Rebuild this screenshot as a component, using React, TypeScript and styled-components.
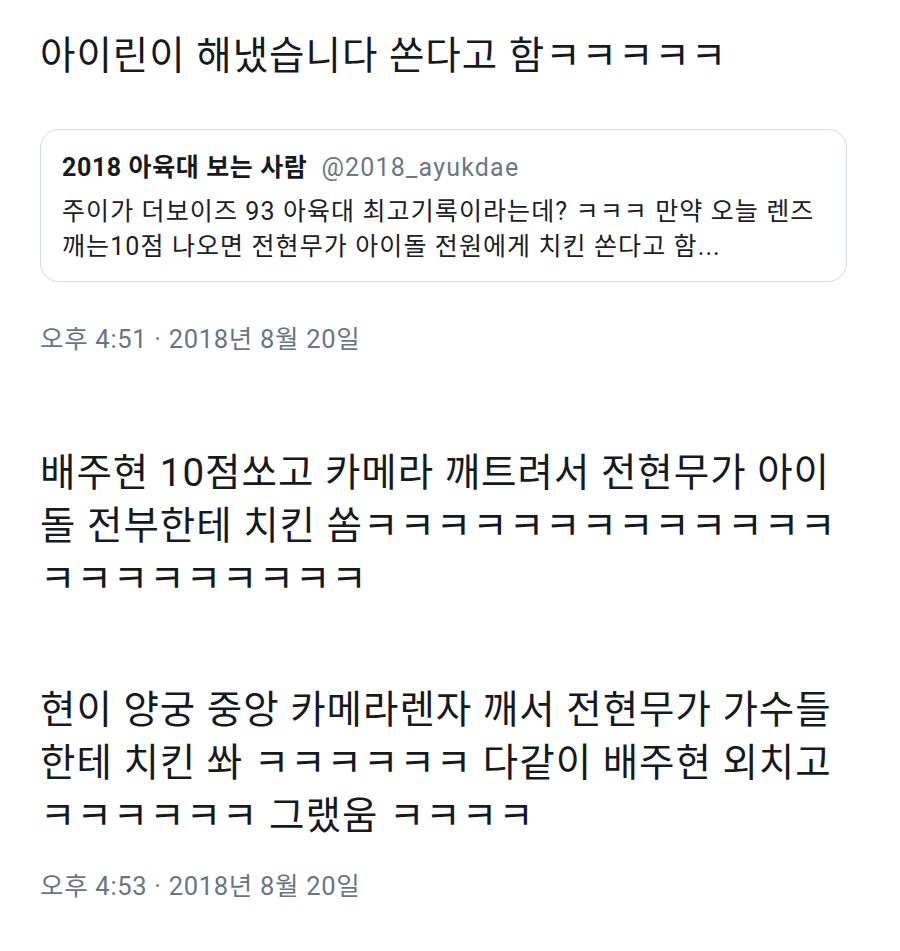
import { createGlobalStyle } from "styled-components";
import styled from "styled-components";

const GlobalStyle = createGlobalStyle`
  html, body {
    margin: 0;
    padding: 0;
    background: #ffffff;
  }
  body {
    font-family: Roboto, "Noto Sans CJK KR", "Noto Sans", sans-serif;
    -webkit-font-smoothing: antialiased;
  }
`;

const Page = styled.div`
  width: 900px;
  min-height: 951px;
  box-sizing: border-box;
  padding: 0 53px 0 40px;
  background: #fff;
`;

const Tweet = styled.section<{ top: number }>`
  display: flex;
  flex-direction: column;
  margin-top: ${(p) => p.top}px;
`;

const TweetText = styled.div`
  font-size: 38.5px;
  letter-spacing: 1px;
  line-height: 53px;
  color: #16191d;
  white-space: nowrap;
`;

const Line = styled.span`
  display: block;
`;

const QuoteCard = styled.div`
  margin-top: 47px;
  border: 1px solid #d3dbe1;
  border-radius: 19px;
  padding: 23px 21px 17px;
`;

const QuoteHead = styled.div`
  display: flex;
  align-items: baseline;
  gap: 14px;
  line-height: 30px;
  white-space: nowrap;
`;

const QuoteName = styled.span`
  font-size: 25px;
  letter-spacing: 0.6px;
  font-weight: 700;
  color: #16191d;
`;

const QuoteHandle = styled.span`
  font-size: 25px;
  letter-spacing: 1.2px;
  color: #6b7884;
`;

const QuoteBody = styled.div`
  margin-top: 11px;
  font-size: 25px;
  letter-spacing: 1.1px;
  line-height: 35px;
  color: #1c2024;
  white-space: nowrap;
`;

const Timestamp = styled.div<{ top: number }>`
  margin-top: ${(p) => p.top}px;
  font-size: 25.5px;
  letter-spacing: 0.7px;
  line-height: 30px;
  color: #687684;
  white-space: nowrap;
`;

const k = (n: number) => "ㅋ".repeat(n);

const secondLines = [
  "배주현 10점쏘고 카메라 깨트려서 전현무가 아이",
  `돌 전부한테 치킨 쏨${k(13)}`,
  k(9),
];

const thirdLines = [
  "현이 양궁 중앙 카메라렌자 깨서 전현무가 가수들",
  `한테 치킨 쏴 ${k(6)} 다같이 배주현 외치고`,
  `${k(6)} 그랬움 ${k(4)}`,
];

export default function App() {
  return (
    <>
      <GlobalStyle />
      <Page>
        <Tweet top={29}>
          <TweetText>아이린이 해냈습니다 쏜다고 함{k(5)}</TweetText>
          <QuoteCard>
            <QuoteHead>
              <QuoteName>2018 아육대 보는 사람</QuoteName>
              <QuoteHandle>@2018_ayukdae</QuoteHandle>
            </QuoteHead>
            <QuoteBody>
              <Line>주이가 더보이즈 93 아육대 최고기록이라는데? {k(3)} 만약 오늘 렌즈</Line>
              <Line>깨는10점 나오면 전현무가 아이돌 전원에게 치킨 쏜다고 함...</Line>
            </QuoteBody>
          </QuoteCard>
          <Timestamp top={42}>오후 4:51 · 2018년 8월 20일</Timestamp>
        </Tweet>
        <Tweet top={92}>
          <TweetText>
            {secondLines.map((l, i) => (
              <Line key={i}>{l}</Line>
            ))}
          </TweetText>
        </Tweet>
        <Tweet top={78}>
          <TweetText>
            {thirdLines.map((l, i) => (
              <Line key={i}>{l}</Line>
            ))}
          </TweetText>
          <Timestamp top={29}>오후 4:53 · 2018년 8월 20일</Timestamp>
        </Tweet>
      </Page>
    </>
  );
}
